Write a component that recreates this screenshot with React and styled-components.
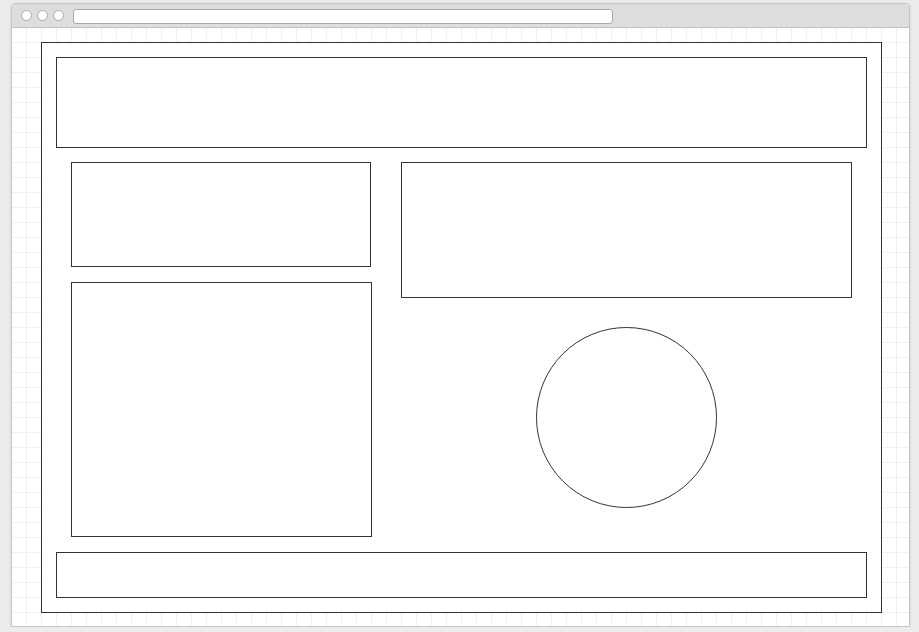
import React from "react";
import styled, { createGlobalStyle } from "styled-components";

const Global = createGlobalStyle`
  html, body { margin: 0; padding: 0; background: #ececec; font-family: "Liberation Sans", Arial, sans-serif; }
  * { box-sizing: border-box; }
`;

const Window = styled.div`
  margin: 3px 0 0 11px;
  width: 899px;
  height: 624px;
  border: 1px solid #c4c4c4;
  border-radius: 4px 4px 0 0;
  box-shadow: 0 1px 3px rgba(0, 0, 0, 0.12);
  display: flex;
  flex-direction: column;
  overflow: hidden;
  background: #fff;
`;

const TitleBar = styled.div`
  height: 24px;
  flex: none;
  background: #dddddd;
  border-bottom: 1px solid #c2c2c2;
  display: flex;
  align-items: center;
  padding-left: 9px;
  gap: 5px;
`;

const Dot = styled.span`
  width: 11px;
  height: 11px;
  border-radius: 50%;
  background: #fff;
  border: 1px solid #a8a8a8;
`;

const Address = styled.div`
  margin: 1px 0 0 4px;
  width: 540px;
  height: 15px;
  background: #fff;
  border: 1px solid #a9a9a9;
  border-radius: 3px;
`;

const Canvas = styled.div`
  flex: 1;
  padding: 14px 0 0 29px;
  background-color: #fff;
  background-image:
    linear-gradient(to right, transparent 14px, #f0f0f0 14px),
    linear-gradient(to bottom, transparent 14px, #f0f0f0 14px);
  background-size: 15px 15px;
`;

const Frame = styled.div`
  width: 841px;
  height: 571px;
  border: 1px solid #333;
  background: #fff;
  padding: 14px;
  display: flex;
  flex-direction: column;
`;

const Box = styled.div`
  border: 1px solid #333;
  width: ${(p) => p.$w || "auto"};
  height: ${(p) => p.$h};
  flex: none;
`;

const Main = styled.div`
  height: 404px;
  flex: none;
  padding: 14px 15px 15px;
  display: flex;
  gap: 29px;
`;

const LeftCol = styled.div`
  display: flex;
  flex-direction: column;
  gap: 15px;
  width: 301px;
`;

const RightCol = styled.div`
  display: flex;
  flex-direction: column;
  align-items: center;
  gap: 29px;
  width: 451px;
`;

const Circle = styled.div`
  width: 181px;
  height: 181px;
  border: 1px solid #333;
  border-radius: 50%;
`;

export default function App() {
  return (
    <>
      <Global />
      <Window>
        <TitleBar>
          <Dot />
          <Dot />
          <Dot />
          <Address />
        </TitleBar>
        <Canvas>
          <Frame>
            <Box $h="91px" />
            <Main>
              <LeftCol>
                <Box $w="300px" $h="105px" />
                <Box $w="301px" $h="255px" />
              </LeftCol>
              <RightCol>
                <Box $w="451px" $h="136px" />
                <Circle />
              </RightCol>
            </Main>
            <Box $h="46px" />
          </Frame>
        </Canvas>
      </Window>
    </>
  );
}
